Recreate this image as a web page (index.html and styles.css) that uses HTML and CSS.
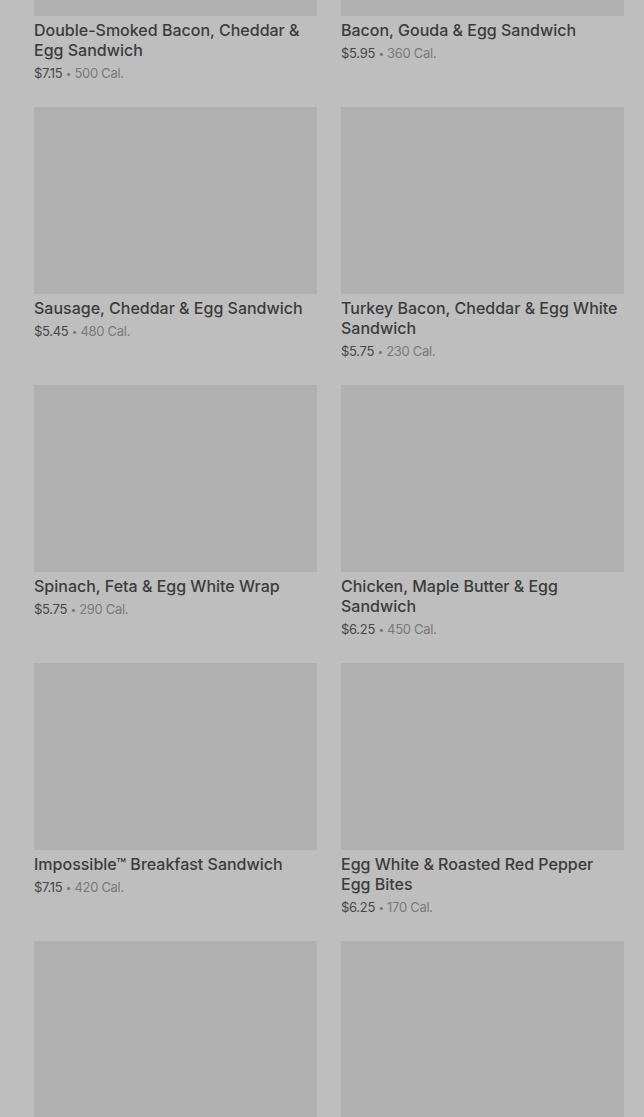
FILE: index.html
```html
<!DOCTYPE html>
<html lang="en">
<head>
<meta charset="utf-8">
<title>Menu</title>
<link rel="stylesheet" href="styles.css">
</head>
<body>
<main class="grid">
  <article class="card">
    <div class="thumb"></div>
    <h3 class="title">Double-Smoked Bacon, Cheddar &amp; Egg Sandwich</h3>
    <p class="meta"><span class="price">$7.15</span> <span class="dot">•</span> <span class="cal">500 Cal.</span></p>
  </article>
  <article class="card">
    <div class="thumb"></div>
    <h3 class="title">Bacon, Gouda &amp; Egg Sandwich</h3>
    <p class="meta"><span class="price">$5.95</span> <span class="dot">•</span> <span class="cal">360 Cal.</span></p>
  </article>
  <article class="card">
    <div class="thumb"></div>
    <h3 class="title">Sausage, Cheddar &amp; Egg Sandwich</h3>
    <p class="meta"><span class="price">$5.45</span> <span class="dot">•</span> <span class="cal">480 Cal.</span></p>
  </article>
  <article class="card">
    <div class="thumb"></div>
    <h3 class="title">Turkey Bacon, Cheddar &amp; Egg White Sandwich</h3>
    <p class="meta"><span class="price">$5.75</span> <span class="dot">•</span> <span class="cal">230 Cal.</span></p>
  </article>
  <article class="card">
    <div class="thumb"></div>
    <h3 class="title">Spinach, Feta &amp; Egg White Wrap</h3>
    <p class="meta"><span class="price">$5.75</span> <span class="dot">•</span> <span class="cal">290 Cal.</span></p>
  </article>
  <article class="card">
    <div class="thumb"></div>
    <h3 class="title">Chicken, Maple Butter &amp; Egg Sandwich</h3>
    <p class="meta"><span class="price">$6.25</span> <span class="dot">•</span> <span class="cal">450 Cal.</span></p>
  </article>
  <article class="card">
    <div class="thumb"></div>
    <h3 class="title">Impossible™ Breakfast Sandwich</h3>
    <p class="meta"><span class="price">$7.15</span> <span class="dot">•</span> <span class="cal">420 Cal.</span></p>
  </article>
  <article class="card">
    <div class="thumb"></div>
    <h3 class="title">Egg White &amp; Roasted Red Pepper Egg Bites</h3>
    <p class="meta"><span class="price">$6.25</span> <span class="dot">•</span> <span class="cal">170 Cal.</span></p>
  </article>
  <article class="card">
    <div class="thumb"></div>
  </article>
  <article class="card">
    <div class="thumb"></div>
  </article>
</main>
</body>
</html>
```
FILE: styles.css
```css
html, body {
  margin: 0;
  padding: 0;
  background: #bebebe;
  overflow: hidden;
}
body {
  font-family: Inter, "Noto Sans", sans-serif;
  height: 1117px;
}
.grid {
  display: grid;
  grid-template-columns: 283px 283px;
  column-gap: 24px;
  row-gap: 24px;
  padding: 0 20px 0 34px;
  margin-top: -171px;
}
.card {
  margin: 0;
}
.thumb {
  height: 187px;
  background: #b0b0b0;
}
.title {
  margin: 4px 0 0;
  font-size: 16px;
  line-height: 20px;
  font-weight: 500;
  color: #3c3c3c;
}
.meta {
  margin: 3px 0 0;
  font-size: 13px;
  line-height: 20px;
  letter-spacing: -0.3px;
}
.price {
  color: #474747;
}
.dot {
  color: #7a7a7a;
  font-size: 10px;
  line-height: 1;
  vertical-align: 1px;
}
.cal {
  color: #7a7a7a;
}
```
